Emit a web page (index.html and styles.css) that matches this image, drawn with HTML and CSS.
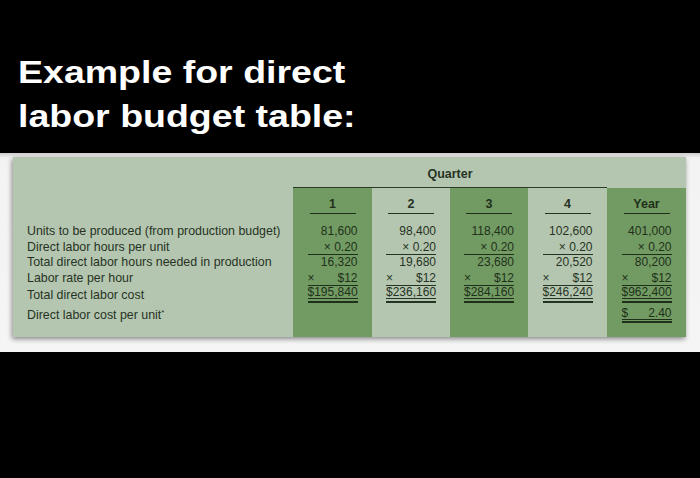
FILE: index.html
```html
<!DOCTYPE html>
<html>
<head>
<meta charset="utf-8">
<link rel="stylesheet" href="styles.css">
</head>
<body>
<div class="title">
  <h1><span>Example for direct</span><span>labor budget table:</span></h1>
</div>
<div class="band">
  <div class="panel">
    <div class="qhead">Quarter</div>
    <div class="labels">
      <div>Units to be produced (from production budget)</div>
      <div>Direct labor hours per unit</div>
      <div>Total direct labor hours needed in production</div>
      <div>Labor rate per hour</div>
      <div class="l5">Total direct labor cost</div>
      <div class="l6">Direct labor cost per unit<span class="ast">*</span></div>
    </div>
    <div class="col g">
      <div class="head"><span>1</span></div>
      <div class="rows">
        <div class="r end">81,600</div>
        <div class="r end ul">× 0.20</div>
        <div class="r end">16,320</div>
        <div class="r ul"><span>×</span><span>$12</span></div>
        <div class="r tot"><div class="u"><span>$195,840</span></div></div>
      </div>
    </div>
    <div class="col lt">
      <div class="head"><span>2</span></div>
      <div class="rows">
        <div class="r end">98,400</div>
        <div class="r end ul">× 0.20</div>
        <div class="r end">19,680</div>
        <div class="r ul"><span>×</span><span>$12</span></div>
        <div class="r tot"><div class="u"><span>$236,160</span></div></div>
      </div>
    </div>
    <div class="col g">
      <div class="head"><span>3</span></div>
      <div class="rows">
        <div class="r end">118,400</div>
        <div class="r end ul">× 0.20</div>
        <div class="r end">23,680</div>
        <div class="r ul"><span>×</span><span>$12</span></div>
        <div class="r tot"><div class="u"><span>$284,160</span></div></div>
      </div>
    </div>
    <div class="col lt">
      <div class="head"><span>4</span></div>
      <div class="rows">
        <div class="r end">102,600</div>
        <div class="r end ul">× 0.20</div>
        <div class="r end">20,520</div>
        <div class="r ul"><span>×</span><span>$12</span></div>
        <div class="r tot"><div class="u"><span>$246,240</span></div></div>
      </div>
    </div>
    <div class="col g">
      <div class="head"><span>Year</span></div>
      <div class="rows">
        <div class="r end">401,000</div>
        <div class="r end ul">× 0.20</div>
        <div class="r end">80,200</div>
        <div class="r ul"><span>×</span><span>$12</span></div>
        <div class="r tot"><div class="u"><span>$</span><span>962,400</span></div></div>
        <div class="r tot r6"><div class="u"><span>$</span><span>2.40</span></div></div>
      </div>
    </div>
  </div>
</div>
</body>
</html>
```

FILE: styles.css
```css
body {
  margin: 0;
  background: #000;
  font-family: "Liberation Sans", Arial, sans-serif;
}

.title {
  height: 153px;
  box-sizing: border-box;
  padding: 51px 0 0 18px;
}

.title h1 {
  display: inline-block;
  margin: 0;
  font-size: 31px;
  line-height: 44px;
  font-weight: bold;
  color: #fff;
  transform: scaleX(1.21);
  transform-origin: 0 0;
}

.title h1 span {
  display: block;
}

.band {
  height: 199px;
  box-sizing: border-box;
  padding: 4px 14px 15px 13px;
  background: linear-gradient(#cfcfcf, #f3f3f3 5px, #f5f5f5);
}

.panel {
  height: 180px;
  display: grid;
  grid-template-columns: 280px 79px 78px 78px 79px 79px;
  grid-template-rows: 31px 149px;
  background: #b5c6b0;
  box-shadow: -1px 2px 5px rgba(0, 0, 0, 0.45);
  color: #263324;
}

.qhead {
  grid-column: 2 / 6;
  grid-row: 1;
  box-sizing: border-box;
  padding-top: 4px;
  line-height: 26px;
  border-bottom: 1px solid #2d3a2a;
  text-align: center;
  font-weight: bold;
  font-size: 12.5px;
}

.labels {
  grid-row: 2;
  grid-column: 1;
  padding: 36.25px 0 0 14px;
  font-size: 12.4px;
}

.labels div {
  line-height: 15.5px;
  white-space: nowrap;
}

.labels .l5 {
  margin-top: 2px;
}

.labels .l6 {
  margin-top: 1.5px;
}

.ast {
  font-size: 8px;
  vertical-align: 4px;
}

.col {
  grid-row: 2;
  font-size: 12px;
}

.g {
  background: #729b63;
  color: #1f301a;
}

.lt {
  color: #263324;
}

.head {
  height: 26px;
  display: flex;
  justify-content: center;
  align-items: flex-end;
}

.head span {
  width: 46px;
  text-align: center;
  font-weight: bold;
  font-size: 12.5px;
  line-height: 14px;
  padding-bottom: 2px;
  border-bottom: 1.5px solid;
}

.rows {
  margin-top: 10.25px;
}

.r {
  width: 50px;
  margin: 0 auto;
  height: 15.5px;
  line-height: 15.5px;
  box-sizing: border-box;
  display: flex;
  justify-content: space-between;
  white-space: nowrap;
}

.r.end {
  justify-content: flex-end;
}

.ul {
  border-bottom: 1px solid;
}

.tot {
  display: block;
  height: 16.5px;
  line-height: normal;
  padding-bottom: 1px;
  border-bottom: 2.5px solid;
}

.tot .u {
  display: flex;
  justify-content: space-between;
  line-height: 12px;
  border-bottom: 1px solid;
}

.r6 {
  margin-top: 4px;
}
```
